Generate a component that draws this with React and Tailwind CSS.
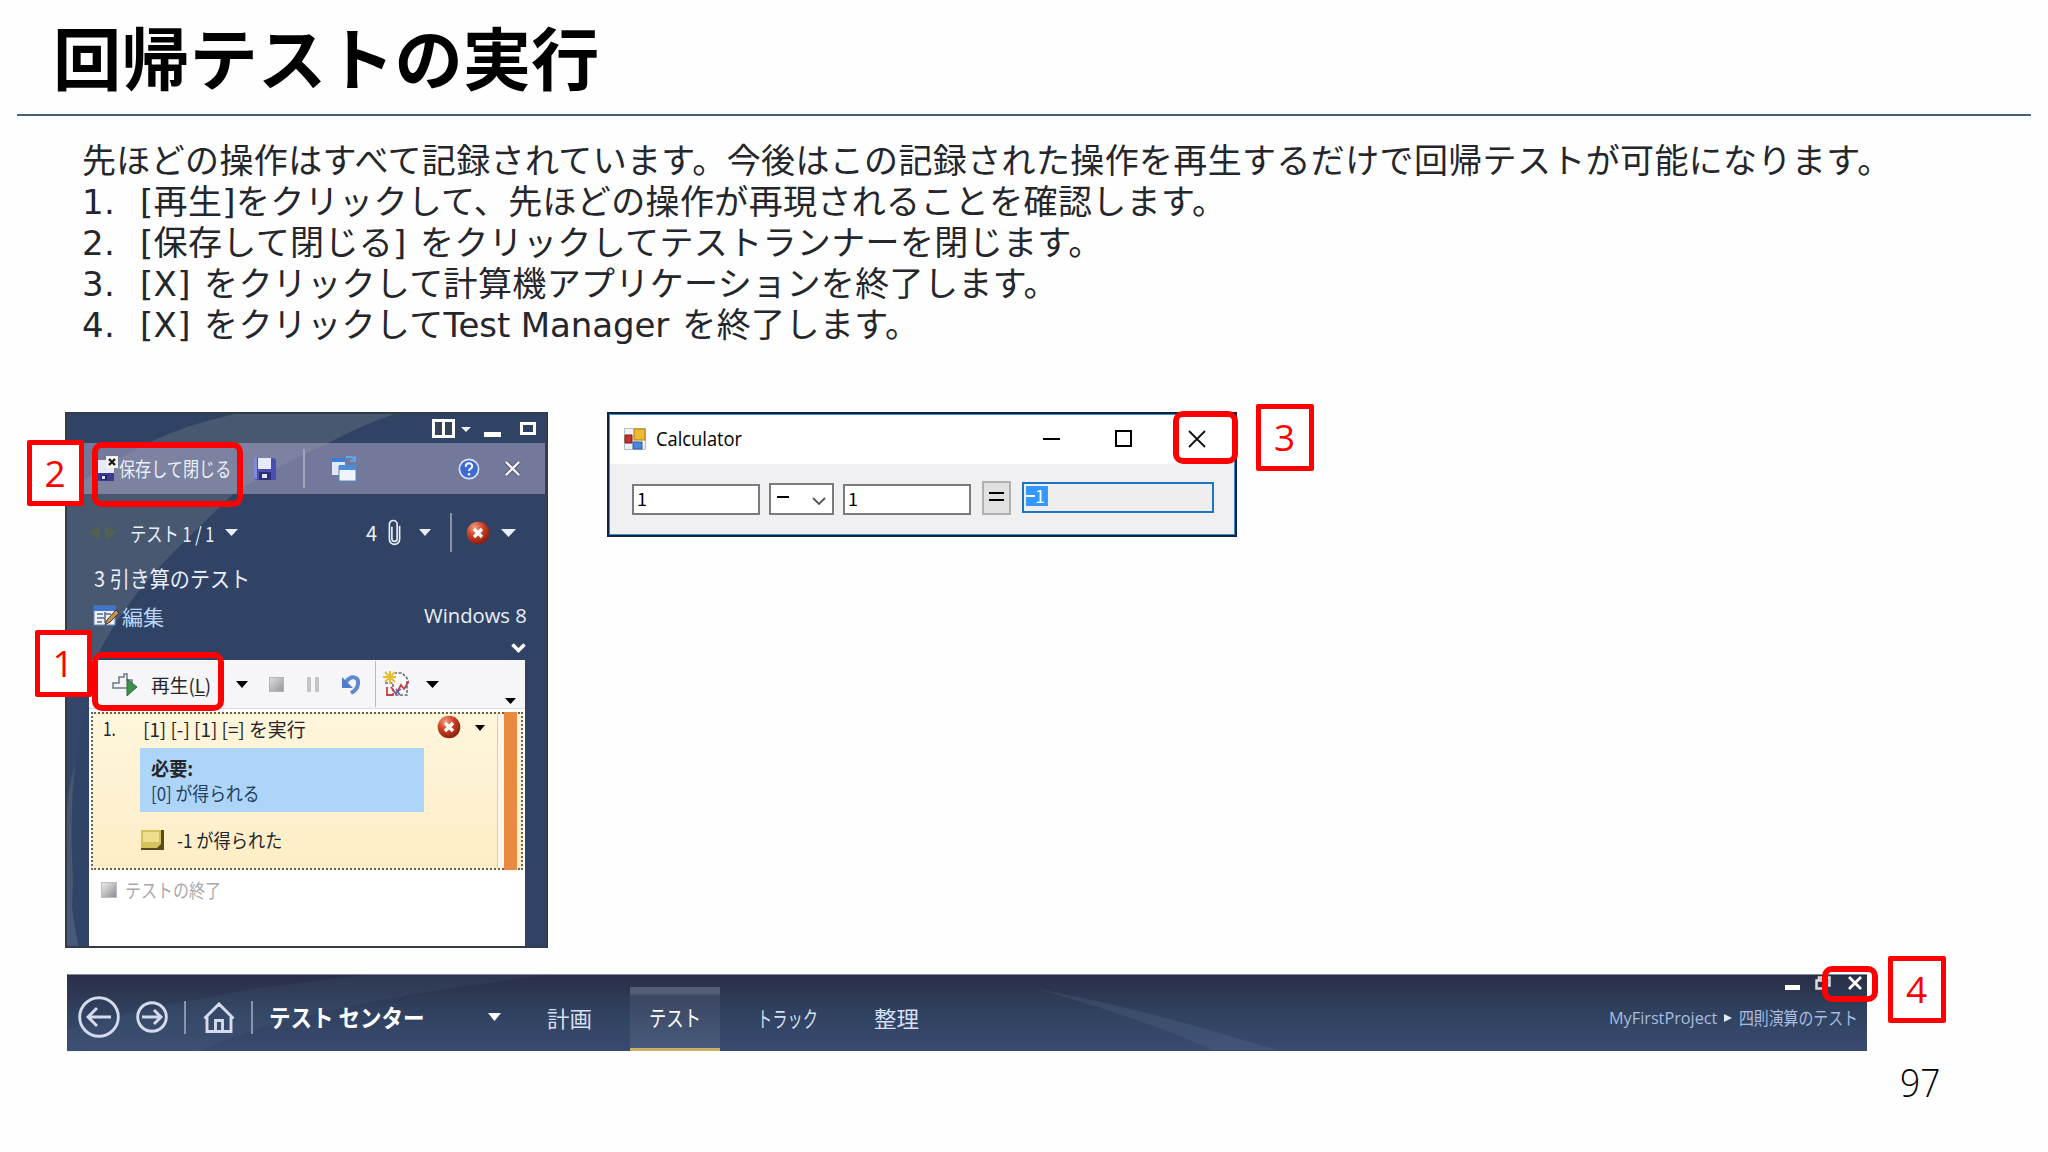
import React, { useLayoutEffect, useRef, useState } from "react";

const STEPS = [
  "[再生]をクリックして、先ほどの操作が再現されることを確認します。",
  "[保存して閉じる] をクリックしてテストランナーを閉じます。",
  "[X] をクリックして計算機アプリケーションを終了します。",
  <>[X] をクリックして<span className="tracking-[-0.1px] [word-spacing:0px]">Test Manager</span> を終了します。</>,
];

// Single line label squeezed or stretched horizontally to a known width
function Fit({ w, className = "", children }) {
  const ref = useRef(null);
  const [scale, setScale] = useState(1);

  useLayoutEffect(() => {
    if (ref.current?.offsetWidth) setScale(w / ref.current.offsetWidth);
  }, [w]);

  return (
    <span className={`block flex-shrink-0 whitespace-nowrap ${className}`} style={{ width: w }}>
      <span ref={ref} className="inline-block origin-left" style={{ transform: `scaleX(${scale})` }}>
        {children}
      </span>
    </span>
  );
}

function Caret({ className = "" }) {
  return (
    <svg viewBox="0 0 12 7" preserveAspectRatio="none" className={`flex-shrink-0 ${className}`}>
      <path d="M0 0h12L6 7z" fill="currentColor" />
    </svg>
  );
}

function FailIcon({ className = "" }) {
  return (
    <svg viewBox="0 0 24 24" className={`w-[24px] h-[24px] flex-shrink-0 ${className}`}>
      <defs>
        <radialGradient id="fail" cx="0.35" cy="0.25" r="0.8">
          <stop offset="0" stopColor="#f0a080" />
          <stop offset="0.45" stopColor="#cf4524" />
          <stop offset="1" stopColor="#861a0c" />
        </radialGradient>
      </defs>
      <circle cx="12" cy="12" r="11.3" fill="url(#fail)" />
      <path d="M8 8l8 8M16 8l-8 8" stroke="#fff" strokeWidth="3.4" />
    </svg>
  );
}

function Floppy({ closing = false, className = "" }) {
  return (
    <svg viewBox="0 0 24 26" className={`w-[24px] h-[26px] flex-shrink-0 ${className}`}>
      {closing ? (
        <>
          <path d="M0 4h9v13H0z" fill="#e6eaf8" />
          <path d="M0 17h17v8H2l-2-2z" fill="#3a3c94" />
          <path d="M9 11h8v6H9z" fill="#e6eaf8" />
          <path d="M4 19h6v5H4z" fill="#23245f" />
          <path d="M5 20h3v3H5z" fill="#dfe4f6" />
          <path d="M9 0h12v12H9z" fill="#f3f3ea" />
          <path d="M12 3l6 6M18 3l-6 6" stroke="#1b1b1b" strokeWidth="2.400" />
        </>
      ) : (
        <>
          <path d="M1 2h20l2 2v20H3l-2-2z" fill="#4b4fb4" />
          <path d="M1 2h3v21H3l-2-1z" fill="#8288dc" />
          <path d="M5 2h13v11H5z" fill="#e6eaf8" />
          <path d="M6 16h12v8H6z" fill="#2e2f75" />
          <path d="M9 18h5v4H9z" fill="#dfe4f6" />
        </>
      )}
    </svg>
  );
}

function Step({ n, className = "" }) {
  return (
    <div
      className={`absolute flex items-center justify-center bg-white border-[5px] border-[#fe0000] rounded-[2px] text-[#fe0000] text-[37px] leading-none pb-[2px] pr-[1px] font-['Open_Sans','Noto_Sans_CJK_JP',sans-serif] ${className}`}
    >
      {n}
    </div>
  );
}

function Ring({ className = "" }) {
  return <div className={`absolute border-[#fe0000] border-[6px] rounded-[10px] ${className}`} />;
}

function RunnerWindow() {
  return (
    <div className="relative w-[483px] h-[536px] flex-shrink-0 flex flex-col bg-[#314365] text-[#e9f0fb] text-[20px] leading-none overflow-hidden">
      {/* light swoosh behind the header */}
      <svg viewBox="0 0 483 536" className="absolute inset-0 w-[483px] h-[536px]">
        <path d="M180 0H335C300 12 280 22 264 31C225 48 190 68 168 82C145 105 120 128 102 147C70 180 42 220 30 250C18 300 10 380 6 536H0V80C30 60 60 42 92 27C120 14 150 6 180 0z" fill="#475870" />
        <path d="M0 250h30L24 310C10 350 2 370 0 430z" fill="#34466a" />
        <path d="M24 288C4 350 2 430 14 536H24z" fill="#304468" />
        <path d="M0 400C2 450 6 500 14 536H0z" fill="#465a7a" />
      </svg>

      <div className="relative h-[31px] flex items-start flex-shrink-0">
        <svg viewBox="0 0 23 19" className="w-[23px] h-[19px] ml-[367px] mt-[7px]">
          <path d="M1.500 1.500h20v16h-20zM11.500 2v15" fill="#34435c" stroke="#fff" strokeWidth="3" />
        </svg>
        <Caret className="w-[10px] h-[5px] ml-[6px] mt-[15px]" />
        <div className="w-[17px] h-[5px] ml-[13px] mt-[20px] bg-white" />
        <div className="w-[16px] h-[13px] ml-[19px] mt-[10px] border-[3px] border-white" />
      </div>

      <div className="relative h-[51px] flex items-center flex-shrink-0 ml-[18px] mr-[3px] bg-[#a09fbe]/60">
        <Floppy closing className="ml-[14px]" />
        <Fit w={112} className="-ml-[2px]">保存して閉じる</Fit>
        <Floppy className="ml-[22px]" />
        <div className="w-[2px] h-[39px] ml-[26px] bg-[#a2a6bd]" />
        <svg viewBox="0 0 26 28" className="w-[26px] h-[28px] ml-[26px] flex-shrink-0">
          <path d="M1 5h13v15H1z" fill="#dfe8f8" />
          <path d="M1 3h13v4H1z" fill="#3c7fd0" />
          <path d="M15 2h6l3 3M24 1v5h-5" fill="none" stroke="#5aa7e4" strokeWidth="2" />
          <path d="M8 11h17v15H8z" fill="#eef3fc" stroke="#5b86c4" />
          <path d="M8 10h17v5H8z" fill="#4a8ddb" />
        </svg>
        <svg viewBox="0 0 24 24" className="w-[22px] h-[22px] ml-[101px] flex-shrink-0">
          <circle cx="12" cy="12" r="10.500" fill="#3d6bd0" stroke="#d9e4fa" strokeWidth="1.800" />
          <path d="M8.500 9.500c0-5 7-4.600 7-.5 0 2.600-3.500 2.600-3.500 5.200" fill="none" stroke="#fff" strokeWidth="2.200" />
          <circle cx="12" cy="17.700" r="1.400" fill="#fff" />
        </svg>
        <svg viewBox="0 0 18 18" className="w-[17px] h-[17px] ml-[24px] flex-shrink-0">
          <path d="M2 2l14 14M16 2L2 16" stroke="#4d5068" strokeWidth="4.500" />
          <path d="M2 2l14 14M16 2L2 16" stroke="#f1f1f4" strokeWidth="2.600" />
        </svg>
      </div>

      <div className="relative h-[77px] flex items-center flex-shrink-0">
        <svg viewBox="0 0 30 14" className="w-[30px] h-[14px] ml-[23px] flex-shrink-0">
          <path d="M12 0v14L0 7zM17 0v14l12-7z" fill="#53614f" />
        </svg>
        <Fit w={84} className="ml-[12px] mt-[2px]">テスト 1 / 1</Fit>
        <Caret className="w-[13px] h-[7px] ml-[11px]" />
        <Fit w={11} className="ml-[128px]">4</Fit>
        <svg viewBox="0 0 13 28" className="w-[13px] h-[27px] ml-[11px] flex-shrink-0">
          <path d="M3.800 8v12.500a2.700 2.700 0 0 0 5.400 0V5.500a4 4 0 0 0-8 0V21a5.200 5.200 0 0 0 10.600 0V7" fill="none" stroke="#e8effa" strokeWidth="1.700" />
        </svg>
        <Caret className="w-[12px] h-[7px] ml-[18px]" />
        <div className="w-[2px] h-[39px] ml-[19px] bg-[#8791a8]" />
        <FailIcon className="ml-[14px]" />
        <Caret className="w-[15px] h-[8px] ml-[11px]" />
      </div>

      <div className="relative h-[20px] flex items-center flex-shrink-0 text-[22px] -mt-[4px]">
        <Fit w={156} className="ml-[29px]">3 引き算のテスト</Fit>
      </div>

      <div className="relative h-[56px] flex items-center flex-shrink-0 pt-[2px]">
        <svg viewBox="0 0 27 22" className="w-[27px] h-[22px] ml-[28px] flex-shrink-0">
          <path d="M1 1h21v19H1z" fill="#eef2f8" stroke="#5f87c7" />
          <path d="M1 1h21v5H1z" fill="#3f73cf" />
          <path d="M4 9h6M4 13h7M4 17h5M12 9h6M12 7v11" stroke="#526a91" strokeWidth="1.600" />
          <path d="M23 5l3 3-9 9-5 3 2-5z" fill="#c49350" stroke="#493a2a" />
        </svg>
        <Fit w={42} className="ml-[2px] mt-[1px] text-[21px] text-[#b9d6f7]">編集</Fit>
        <Fit w={103} className="ml-[260px] font-['Open_Sans',sans-serif] text-[20px]">Windows 8</Fit>
      </div>
      <div className="relative h-[17px] flex-shrink-0 flex justify-end pr-[22px]">
        <svg viewBox="0 0 15 10" className="w-[15px] h-[10px]">
          <path d="M1.500 1.500l6 6 6-6" fill="none" stroke="#fff" strokeWidth="3.500" />
        </svg>
      </div>

      {/* Test steps panel */}
      <div className="relative flex-1 ml-[24px] mr-[23px] flex flex-col bg-white text-[#23262b] text-[19px]">
        <div className="h-[49px] flex items-center flex-shrink-0 bg-[#f6f6f8] border-b border-[#dcdce2]">
          <svg viewBox="0 0 26 26" className="w-[26px] h-[26px] ml-[23px] flex-shrink-0">
            <path d="M1 17v-5h6V6h5V3h3v6h5v8z" fill="#f2f4f6" stroke="#6f7a86" strokeWidth="1.500" />
            <path d="M15 8l10 8-10 9z" fill="#3f8f4e" stroke="#2c6f3b" />
          </svg>
          <Fit w={60} className="ml-[13px]">再生(<u className="underline-offset-2">L</u>)</Fit>
          <Caret className="w-[12px] h-[7px] ml-[25px] text-black" />
          <div className="w-[15px] h-[15px] ml-[21px] bg-gradient-to-br from-[#dddde0] to-[#96969c] border border-[#b5b5b9]" />
          <div className="w-[12px] h-[15px] ml-[23px] border-x-[4px] border-[#c3c3c8]" />
          <svg viewBox="0 0 21 22" className="w-[21px] h-[22px] ml-[22px] flex-shrink-0">
            <path d="M5 9c5-7 13-6 12 2-.5 4-3 7-7 9" fill="none" stroke="#5e88d4" strokeWidth="4" />
            <path d="M1 4v11h11z" fill="#4f7dcc" />
          </svg>
          <div className="w-[1px] h-[46px] ml-[13px] bg-[#b9b9c0]" />
          <svg viewBox="0 0 26 28" className="w-[26px] h-[28px] ml-[7px] flex-shrink-0">
            <path d="M2 13h8v12h14V8l-5-5h-7" fill="#fafafa" stroke="#666b7e" strokeWidth="1.600" strokeDasharray="3 1.500" />
            <path d="M7 1v13M0 7h13M2 2l10 10M12 2L2 12" stroke="#e8bd35" strokeWidth="2" />
            <path d="M4 17v8h6M8 17l5 7 5-9 3 4 5-8" fill="none" stroke="#c2404a" strokeWidth="1.800" />
            <path d="M13 19l4 6M12 24l6-5" stroke="#5668b5" strokeWidth="1.500" />
          </svg>
          <Caret className="w-[13px] h-[7px] ml-[17px] text-black" />
          <Caret className="w-[11px] h-[6px] ml-[66px] mt-[33px] text-black" />
        </div>

        <div className="h-[158px] mt-[3px] ml-[2px] mr-[2px] flex flex-shrink-0 border-2 border-dotted border-[#65645c] bg-gradient-to-b from-[#fff6dc] via-[#fdf1d2] to-[#feeec4]">
          <div className="w-[33px] pl-[10px] pt-[4px] flex-shrink-0">
            <Fit w={13}>1.</Fit>
          </div>
          <div className="w-[299px] flex-shrink-0 flex flex-col pl-[14px]">
            <Fit w={163} className="mt-[5px] ml-[3px]">[1] [-] [1] [=] を実行</Fit>
            <div className="w-[284px] h-[64px] mt-[10px] pl-[11px] flex-shrink-0 bg-[#add4f9] flex flex-col">
              <Fit w={42} className="mt-[10px] font-bold">必要:</Fit>
              <Fit w={109} className="mt-[6px] text-[#24405e]">[0] が得られる</Fit>
            </div>
            <div className="flex items-center mt-[17px]">
              <svg viewBox="0 0 25 22" className="w-[25px] h-[22px] flex-shrink-0">
                <path d="M1 1h23v20H1z" fill="#574b1d" />
                <path d="M1 1h20v14l-4 4H1z" fill="#d6c25c" />
                <path d="M3 3h16v10H3z" fill="#eddf8c" />
              </svg>
              <Fit w={105} className="ml-[12px] -mt-[2px]">-1 が得られた</Fit>
            </div>
          </div>
          <FailIcon className="ml-[12px] mt-[1px]" />
          <Caret className="w-[10px] h-[6px] ml-[14px] mt-[11px] text-black" />
          <div className="w-[7px] ml-[12px] bg-[#fcf6ea] border-l border-[#d3cfc4]" />
          <div className="w-[13px] -my-[2px] bg-[#e98a41]" />
        </div>

        <div className="flex items-center mt-[10px] pl-[12px]">
          <div className="w-[16px] h-[16px] bg-gradient-to-br from-[#ececec] to-[#8f8f92] border border-[#bdbdbd]" />
          <Fit w={96} className="ml-[8px] text-[#a9a9ac]">テストの終了</Fit>
        </div>
      </div>
      <div className="absolute inset-0 border-2 border-[#343b45]" />
    </div>
  );
}

function CalculatorWindow() {
  return (
    <div className="w-[630px] h-[125px] flex-shrink-0 bg-[#f0eff1] border-2 border-[#10233d] flex flex-col text-black leading-none">
      <div className="h-[50px] flex items-center bg-white border-t border-x border-[#3d90cf] flex-shrink-0 pb-[2px]">
        <svg viewBox="0 0 22 22" className="w-[22px] h-[22px] ml-[14px] flex-shrink-0">
          <path d="M.5.5h21v21H.5z" fill="#eef0f2" stroke="#b9bcc2" />
          <path d="M10 1h11v11H10z" fill="#efb931" stroke="#b08113" />
          <path d="M1 7h7v8H1z" fill="#c3352c" stroke="#7d1d18" />
          <path d="M9 14h9v7H9z" fill="#4d86d8" stroke="#2d5da8" />
        </svg>
        <Fit w={86} className="ml-[10px] font-['Open_Sans',sans-serif] text-[20px]">Calculator</Fit>
        <div className="w-[17px] h-[2px] ml-[301px] bg-black" />
        <div className="w-[17px] h-[17px] ml-[55px] border-2 border-black" />
        <svg viewBox="0 0 18 18" className="w-[18px] h-[18px] ml-[56px] flex-shrink-0">
          <path d="M1 1l16 16M17 1L1 17" stroke="#111" strokeWidth="1.800" />
        </svg>
      </div>
      <div className="flex-1 flex items-start pt-[18px] pl-[22px] border-b border-x border-[#3d90cf] text-[18px] font-['Noto_Sans_CJK_JP',sans-serif]">
        <div className="w-[128px] h-[31px] mt-[2px] pl-[3px] pt-[3px] bg-white border-2 border-[#7b7b7b]">1</div>
        <div className="w-[65px] h-[32px] mt-[1px] ml-[9px] flex bg-white border-2 border-[#7b7b7b]">
          <div className="w-[12px] h-[2px] ml-[6px] mt-[11px] bg-black" />
          <svg viewBox="0 0 14 9" className="w-[14px] h-[9px] ml-[23px] mt-[12px]">
            <path d="M1 1l6 6 6-6" fill="none" stroke="#555" strokeWidth="1.800" />
          </svg>
        </div>
        <div className="w-[128px] h-[31px] mt-[2px] ml-[9px] pl-[3px] pt-[3px] bg-white border-2 border-[#7b7b7b]">1</div>
        <div className="w-[29px] h-[34px] -mt-[1px] ml-[11px] flex flex-col items-center pt-[9px] gap-[5px] bg-[#e1e1e1] border-2 border-[#b0b0b0]">
          <div className="w-[15px] h-[2px] bg-black" />
          <div className="w-[15px] h-[2px] bg-black" />
        </div>
        <div className="w-[192px] h-[31px] ml-[11px] pl-[2px] pt-[2px] border-2 border-[#1f74bf] bg-[#efeeee]">
          <div className="w-[22px] h-[20px] flex items-center bg-[#3399ff] text-white border-r border-[#b77f4b]">
            <div className="w-[9px] h-[2px] bg-white" />
            <span className="block -mt-[2px]">1</span>
          </div>
        </div>
      </div>
    </div>
  );
}

function TestCenterBar() {
  return (
    <div className="relative w-[1800px] h-[77px] flex items-center flex-shrink-0 bg-gradient-to-b from-[#2a2f47] via-[#304260] to-[#3a4a70] text-[#d5dff2] text-[22px] leading-none border-t border-[#7f8ba3]">
      <svg viewBox="0 0 1800 77" className="absolute inset-0 w-[1800px] h-[77px]">
        <path d="M0 77V55C90 30 180 12 300 0H480C340 18 210 40 130 77z" fill="#7896b2" opacity=".08" />
        <path d="M970 14C1040 34 1100 54 1145 75H1210C1140 54 1060 30 970 14z" fill="#7896b2" opacity=".14" />
      </svg>
      <svg viewBox="0 0 42 42" className="relative w-[42px] h-[42px] ml-[11px] mt-[8px] flex-shrink-0" fill="none" stroke="#d3dbec" strokeWidth="2.900">
        <circle cx="21" cy="21" r="19.300" />
        <path d="M33 21H10M19 12l-9 9 9 9" />
      </svg>
      <svg viewBox="0 0 32 32" className="relative w-[32px] h-[32px] ml-[16px] mt-[8px] flex-shrink-0" fill="none" stroke="#d3dbec" strokeWidth="2.900">
        <circle cx="16" cy="16" r="14.300" />
        <path d="M6 16h19M18 9l7 7-7 7" />
      </svg>
      <div className="relative w-[2px] h-[33px] ml-[16px] mt-[8px] bg-[#8795b1]" />
      <svg viewBox="0 0 32 31" className="relative w-[32px] h-[31px] ml-[17px] mt-[8px] flex-shrink-0" fill="none" stroke="#d3dbec" strokeWidth="2.900">
        <path d="M1.500 16.500L16 2l14.500 14.500M4 15v14.500h24V15M12.500 29V18.500h7V29" />
      </svg>
      <div className="relative w-[2px] h-[33px] ml-[16px] mt-[8px] bg-[#8795b1]" />
      <Fit w={155} className="relative ml-[16px] mt-[7px] text-[24px] font-bold text-white">テスト センター</Fit>
      <Caret className="relative w-[13px] h-[8px] ml-[64px] mt-[7px] text-white" />
      <Fit w={45} className="relative ml-[46px] mt-[7px]">計画</Fit>
      <div className="relative w-[90px] h-[64px] ml-[38px] mt-[12px] flex-shrink-0 flex items-center justify-center bg-gradient-to-b from-[#535e75] from-10% via-[#3b4762] via-15% to-[#485a7b] border-b-[3px] border-[#c9b06b]">
        <Fit w={52} className="text-white -mt-[3px]">テスト</Fit>
      </div>
      <Fit w={61} className="relative ml-[37px] mt-[7px]">トラック</Fit>
      <Fit w={45} className="relative ml-[56px] mt-[7px]">整理</Fit>
      <div className="relative flex-1 self-stretch flex flex-col items-end pr-[9px]">
        <div className="flex items-start h-[18px] pr-[5px] mt-[1px] -mr-[9px]">
          <div className="w-[15px] h-[5px] mt-[9px] bg-white" />
          <svg viewBox="0 0 16 14" className="w-[16px] h-[14px] ml-[15px]" fill="none" stroke="#d9dde6" strokeWidth="2.500">
            <path d="M4 4V1.500h10.500v8H12M1.500 4.500H11v8H1.500z" />
          </svg>
          <svg viewBox="0 0 14 14" className="w-[14px] h-[14px] ml-[17px]">
            <path d="M1 1l12 12M13 1L1 13" stroke="#fff" strokeWidth="2.800" />
          </svg>
        </div>
        <div className="flex items-center mt-[15px] text-[17px] text-[#a9bcdf]">
          <Fit w={108} className="font-['Open_Sans',sans-serif]">MyFirstProject</Fit>
          <svg viewBox="0 0 8 8" className="w-[8px] h-[8px] ml-[7px]">
            <path d="M0 0l8 4-8 4z" fill="#e4ebf8" />
          </svg>
          <Fit w={119} className="ml-[7px] -mt-[2px] text-[18px]">四則演算のテスト</Fit>
        </div>
      </div>
    </div>
  );
}

export default function App() {
  return (
    <div className="relative w-[2048px] h-[1152px] overflow-hidden bg-[#fefefe] flex flex-col font-['Noto_Sans_CJK_JP',sans-serif]">
      <header className="h-[116px] mx-[17px] pl-[36px] pt-[21px] flex-shrink-0 border-b-2 border-[#45617d]">
        <h1 className="text-[68.300px] leading-[70px] font-bold text-black whitespace-nowrap">回帰テストの実行</h1>
      </header>

      <main className="pl-[82px] pt-[25px] h-[296px] flex-shrink-0 text-[34px] tracking-[0.36px] [word-spacing:2px] leading-[41px] text-[#24262c] whitespace-nowrap font-['DejaVu_Sans','Noto_Sans_CJK_JP',sans-serif]">
        <p className="h-[41px]">先ほどの操作はすべて記録されています。今後はこの記録された操作を再生するだけで回帰テストが可能になります。</p>
        <ol>
          {STEPS.map((s, i) => (
            <li key={i} className="flex h-[41px]">
              <span className="w-[58px]">{i + 1}.</span>
              <span>{s}</span>
            </li>
          ))}
        </ol>
      </main>

      <div className="flex items-start gap-[59px] pl-[65px] h-[562px] flex-shrink-0">
        <RunnerWindow />
        <CalculatorWindow />
      </div>
      <div className="pl-[67px] flex-shrink-0">
        <TestCenterBar />
      </div>
      <footer className="flex justify-end pr-[108px] pt-[7px] text-[38px] leading-[48px] text-black">
        <Fit w={40} className="font-light font-['Open_Sans',sans-serif]">97</Fit>
      </footer>

      {/* Numbered callouts */}
      <Step n={1} className="left-[35px] top-[630px] w-[57px] h-[67px]" />
      <Ring className="left-[92px] top-[652px] w-[132px] h-[59px]" />
      <Step n={2} className="left-[27px] top-[440px] w-[57px] h-[66px]" />
      <Ring className="left-[92px] top-[442px] w-[151px] h-[65px]" />
      <Step n={3} className="left-[1256px] top-[404px] w-[58px] h-[67px]" />
      <Ring className="left-[1173px] top-[411px] w-[65px] h-[53px]" />
      <Step n={4} className="left-[1888px] top-[956px] w-[58px] h-[67px]" />
      <Ring className="left-[1822px] top-[966px] w-[56px] h-[36px]" />
    </div>
  );
}
